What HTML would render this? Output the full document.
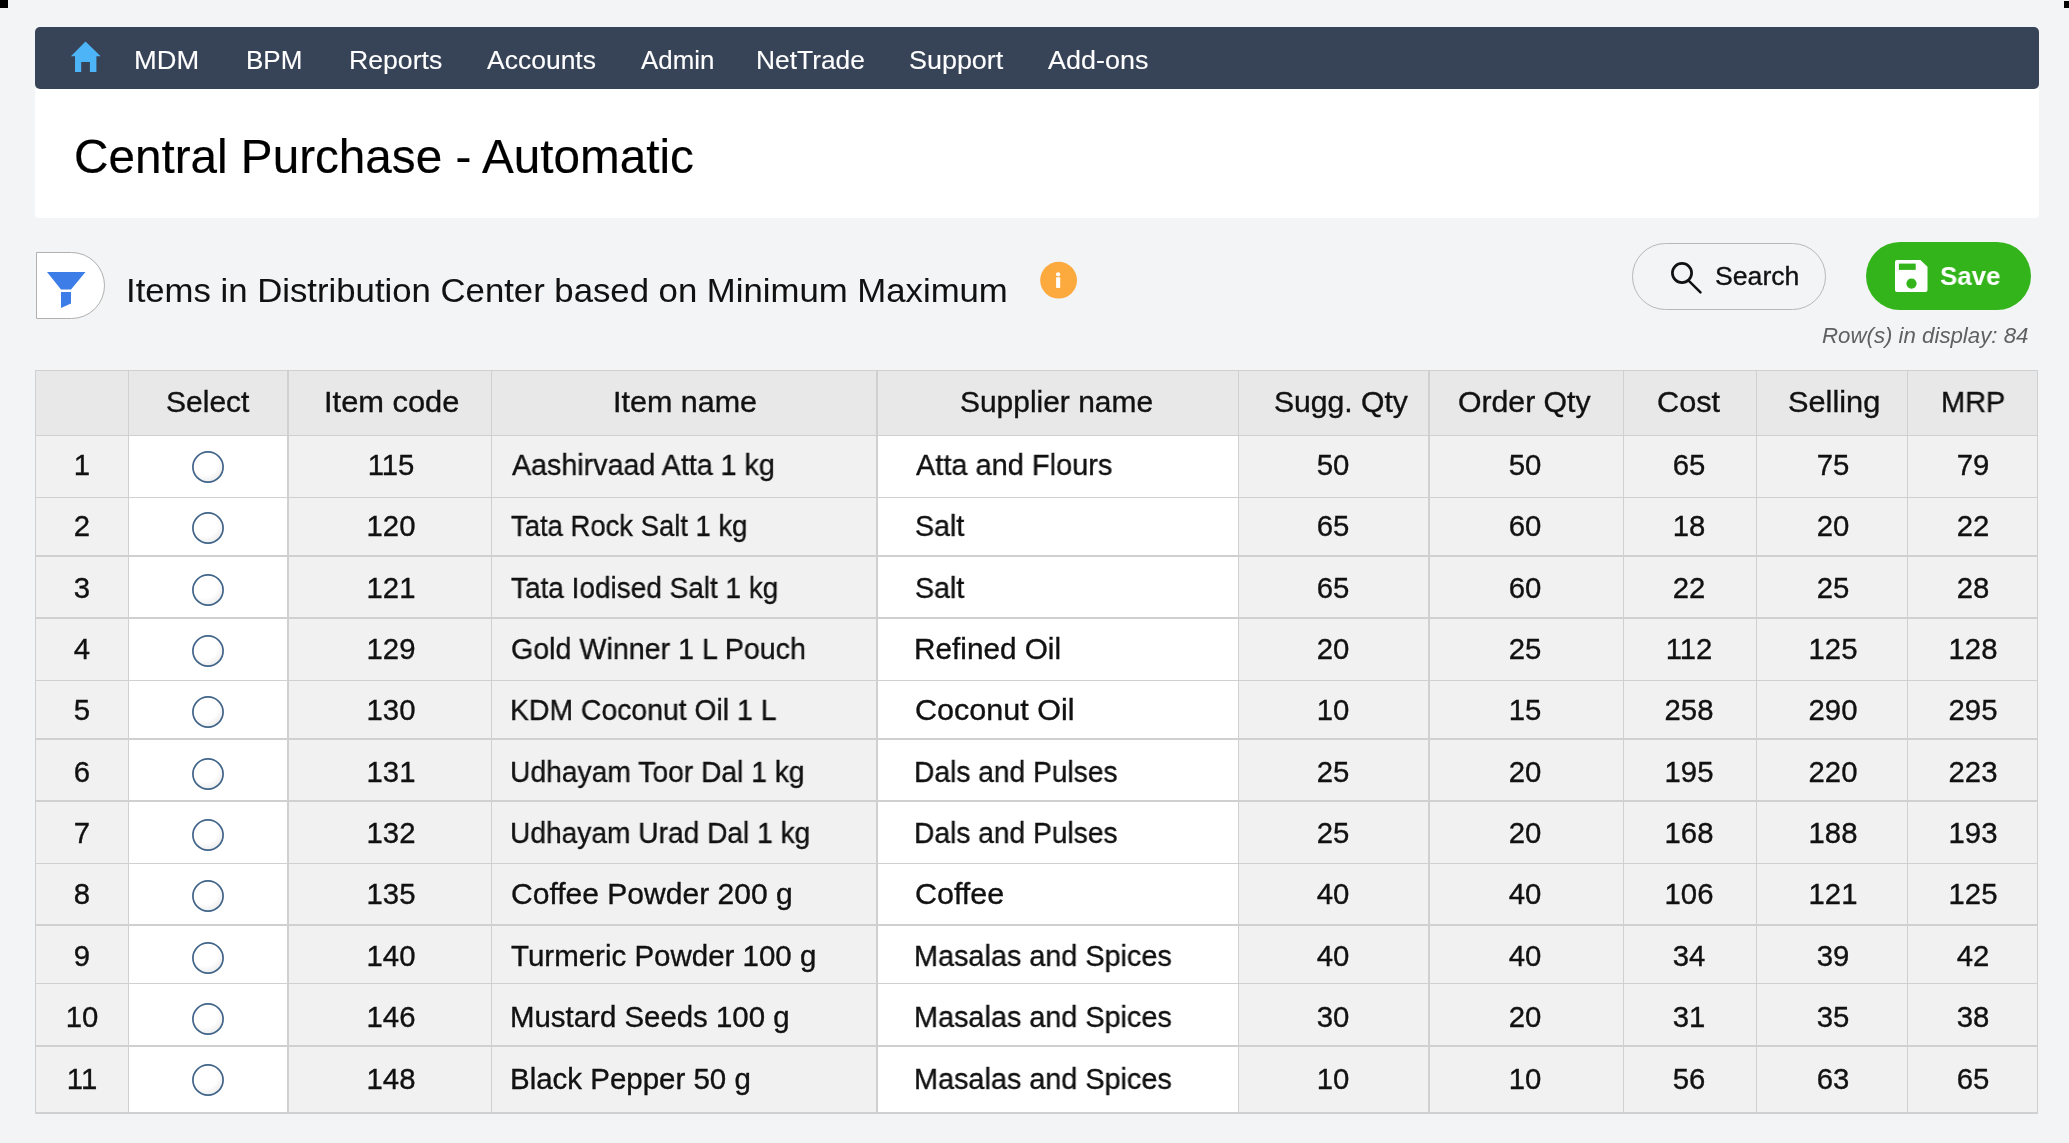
<!DOCTYPE html>
<html><head><meta charset="utf-8"><style>
html,body{margin:0;padding:0;}
body{width:2069px;height:1143px;background:#f3f4f6;position:relative;overflow:hidden;font-family:"Liberation Sans", sans-serif;}
.t{position:absolute;white-space:nowrap;-webkit-text-stroke:0.35px currentColor;will-change:transform;}
</style></head><body>
<svg width="0" height="0" style="position:absolute"><defs><radialGradient id="rg" cx="0.4" cy="0.35" r="0.75"><stop offset="0.55" stop-color="#ffffff"/><stop offset="1" stop-color="#e6e6e6"/></radialGradient></defs></svg>
<div style="position:absolute;left:0;top:0;width:8px;height:8px;background:#000"></div>
<div style="position:absolute;left:2064px;top:1px;width:5px;height:7px;background:#000"></div>
<div style="position:absolute;left:35px;top:27px;width:2004px;height:62px;background:#374357;border-radius:5px"></div>
<svg style="position:absolute;left:0;top:0" width="200" height="100"><path d="M85.5 41.5 L100.7 56.2 L96.4 56.2 L96.4 72 L89.9 72 L89.9 62 L81.2 62 L81.2 72 L75 72 L75 56.2 L70.9 56.2 Z" fill="#4db4f7"/></svg>
<div style="position:absolute;left:35px;top:89px;width:2004px;height:129px;background:#fff;border-radius:0 0 4px 4px"></div>
<div style="position:absolute;left:36px;top:252px;width:69px;height:67px;box-sizing:border-box;border:1px solid #b0b0b0;border-radius:0 33.5px 33.5px 0;background:#fff"></div>
<svg style="position:absolute;left:0;top:0" width="120" height="330"><path d="M47 272 L85.5 272 L71 289.5 L61 289.5 Z M61 292 L71 292 L71 303.5 L61 308 Z" fill="#3d7de8"/></svg>
<svg style="position:absolute;left:1030px;top:250px" width="60" height="60"><circle cx="28.6" cy="30.2" r="18.4" fill="#fcaa3e"/><circle cx="28.1" cy="24.3" r="2.1" fill="#fff"/><rect x="26.1" y="27.3" width="4.1" height="10.6" fill="#fff"/></svg>
<div style="position:absolute;left:1632px;top:243px;width:194px;height:67px;box-sizing:border-box;border:1.2px solid #b8b8b8;border-radius:34px"></div>
<svg style="position:absolute;left:1660px;top:250px" width="60" height="60"><circle cx="22" cy="23" r="9.6" fill="none" stroke="#111" stroke-width="2.7"/><path d="M28.6 30.6 L40.5 42.3" stroke="#111" stroke-width="2.5" stroke-linecap="round"/></svg>
<div style="position:absolute;left:1865.5px;top:242px;width:165px;height:68px;border-radius:34px;background:#33b41a"></div>
<svg style="position:absolute;left:1890px;top:255px" width="45" height="45"><path d="M7 5 h23.4 l7.1 6.8 v23.2 a2 2 0 0 1 -2 2 h-28.5 a2 2 0 0 1 -2 -2 v-28 a2 2 0 0 1 2 -2 z" fill="#fff"/><rect x="8.9" y="8.6" width="16.8" height="6.3" fill="#33b41a"/><circle cx="21.5" cy="28.6" r="5.1" fill="#33b41a"/></svg>
<div style="position:absolute;left:35px;top:370px;width:2002px;height:65px;background:#e8e8e8"></div>
<div style="position:absolute;left:35px;top:435px;width:93.00px;height:677.5px;background:#f1f1f1"></div>
<div style="position:absolute;left:128px;top:435px;width:159.50px;height:677.5px;background:#ffffff"></div>
<div style="position:absolute;left:287.5px;top:435px;width:203.50px;height:677.5px;background:#f1f1f1"></div>
<div style="position:absolute;left:491px;top:435px;width:385.50px;height:677.5px;background:#f1f1f1"></div>
<div style="position:absolute;left:876.5px;top:435px;width:361.50px;height:677.5px;background:#ffffff"></div>
<div style="position:absolute;left:1238px;top:435px;width:190.70px;height:677.5px;background:#f1f1f1"></div>
<div style="position:absolute;left:1428.7px;top:435px;width:194.60px;height:677.5px;background:#f1f1f1"></div>
<div style="position:absolute;left:1623.3px;top:435px;width:132.70px;height:677.5px;background:#f1f1f1"></div>
<div style="position:absolute;left:1756px;top:435px;width:151.20px;height:677.5px;background:#f1f1f1"></div>
<div style="position:absolute;left:1907.2px;top:435px;width:129.80px;height:677.5px;background:#f1f1f1"></div>
<div style="position:absolute;left:35px;top:369.50px;width:2003px;height:1.5px;background:#d0d0d0"></div>
<div style="position:absolute;left:35px;top:434.50px;width:2003px;height:1.5px;background:#d0d0d0"></div>
<div style="position:absolute;left:35px;top:496.70px;width:2003px;height:1.5px;background:#d0d0d0"></div>
<div style="position:absolute;left:35px;top:555.10px;width:2003px;height:1.5px;background:#d0d0d0"></div>
<div style="position:absolute;left:35px;top:617.40px;width:2003px;height:1.5px;background:#d0d0d0"></div>
<div style="position:absolute;left:35px;top:679.50px;width:2003px;height:1.5px;background:#d0d0d0"></div>
<div style="position:absolute;left:35px;top:738.00px;width:2003px;height:1.5px;background:#d0d0d0"></div>
<div style="position:absolute;left:35px;top:800.40px;width:2003px;height:1.5px;background:#d0d0d0"></div>
<div style="position:absolute;left:35px;top:862.50px;width:2003px;height:1.5px;background:#d0d0d0"></div>
<div style="position:absolute;left:35px;top:924.00px;width:2003px;height:1.5px;background:#d0d0d0"></div>
<div style="position:absolute;left:35px;top:982.90px;width:2003px;height:1.5px;background:#d0d0d0"></div>
<div style="position:absolute;left:35px;top:1045.40px;width:2003px;height:1.5px;background:#d0d0d0"></div>
<div style="position:absolute;left:35px;top:1112.00px;width:2003px;height:1.5px;background:#d0d0d0"></div>
<div style="position:absolute;left:34.50px;top:370px;width:1.5px;height:743.5px;background:#d0d0d0"></div>
<div style="position:absolute;left:127.50px;top:370px;width:1.5px;height:743.5px;background:#d0d0d0"></div>
<div style="position:absolute;left:287.00px;top:370px;width:1.5px;height:743.5px;background:#d0d0d0"></div>
<div style="position:absolute;left:490.50px;top:370px;width:1.5px;height:743.5px;background:#d0d0d0"></div>
<div style="position:absolute;left:876.00px;top:370px;width:1.5px;height:743.5px;background:#d0d0d0"></div>
<div style="position:absolute;left:1237.50px;top:370px;width:1.5px;height:743.5px;background:#d0d0d0"></div>
<div style="position:absolute;left:1428.20px;top:370px;width:1.5px;height:743.5px;background:#d0d0d0"></div>
<div style="position:absolute;left:1622.80px;top:370px;width:1.5px;height:743.5px;background:#d0d0d0"></div>
<div style="position:absolute;left:1755.50px;top:370px;width:1.5px;height:743.5px;background:#d0d0d0"></div>
<div style="position:absolute;left:1906.70px;top:370px;width:1.5px;height:743.5px;background:#d0d0d0"></div>
<div style="position:absolute;left:2036.50px;top:370px;width:1.5px;height:743.5px;background:#d0d0d0"></div>
<div class="t" style="left:-218.50px;width:600px;text-align:center;top:450.00px;font-size:29.3px;line-height:29.3px;color:#111;font-weight:normal;font-style:normal;transform-origin:50% 0;">1</div>
<svg style="position:absolute;left:188px;top:446.80px" width="40" height="40"><circle cx="20" cy="20" r="15.1" fill="url(#rg)" stroke="#416489" stroke-width="1.7"/></svg>
<div class="t" style="left:90.50px;width:600px;text-align:center;top:450.00px;font-size:29.3px;line-height:29.3px;color:#111;font-weight:normal;font-style:normal;transform-origin:50% 0;">115</div>
<div class="t" style="left:1033.40px;width:600px;text-align:center;top:450.00px;font-size:29.3px;line-height:29.3px;color:#111;font-weight:normal;font-style:normal;transform-origin:50% 0;">50</div>
<div class="t" style="left:1225.00px;width:600px;text-align:center;top:450.00px;font-size:29.3px;line-height:29.3px;color:#111;font-weight:normal;font-style:normal;transform-origin:50% 0;">50</div>
<div class="t" style="left:1389.00px;width:600px;text-align:center;top:450.00px;font-size:29.3px;line-height:29.3px;color:#111;font-weight:normal;font-style:normal;transform-origin:50% 0;">65</div>
<div class="t" style="left:1532.50px;width:600px;text-align:center;top:450.00px;font-size:29.3px;line-height:29.3px;color:#111;font-weight:normal;font-style:normal;transform-origin:50% 0;">75</div>
<div class="t" style="left:1672.50px;width:600px;text-align:center;top:450.00px;font-size:29.3px;line-height:29.3px;color:#111;font-weight:normal;font-style:normal;transform-origin:50% 0;">79</div>
<div class="t" style="left:-218.50px;width:600px;text-align:center;top:511.35px;font-size:29.3px;line-height:29.3px;color:#111;font-weight:normal;font-style:normal;transform-origin:50% 0;">2</div>
<svg style="position:absolute;left:188px;top:508.15px" width="40" height="40"><circle cx="20" cy="20" r="15.1" fill="url(#rg)" stroke="#416489" stroke-width="1.7"/></svg>
<div class="t" style="left:90.50px;width:600px;text-align:center;top:511.35px;font-size:29.3px;line-height:29.3px;color:#111;font-weight:normal;font-style:normal;transform-origin:50% 0;">120</div>
<div class="t" style="left:1033.40px;width:600px;text-align:center;top:511.35px;font-size:29.3px;line-height:29.3px;color:#111;font-weight:normal;font-style:normal;transform-origin:50% 0;">65</div>
<div class="t" style="left:1225.00px;width:600px;text-align:center;top:511.35px;font-size:29.3px;line-height:29.3px;color:#111;font-weight:normal;font-style:normal;transform-origin:50% 0;">60</div>
<div class="t" style="left:1389.00px;width:600px;text-align:center;top:511.35px;font-size:29.3px;line-height:29.3px;color:#111;font-weight:normal;font-style:normal;transform-origin:50% 0;">18</div>
<div class="t" style="left:1532.50px;width:600px;text-align:center;top:511.35px;font-size:29.3px;line-height:29.3px;color:#111;font-weight:normal;font-style:normal;transform-origin:50% 0;">20</div>
<div class="t" style="left:1672.50px;width:600px;text-align:center;top:511.35px;font-size:29.3px;line-height:29.3px;color:#111;font-weight:normal;font-style:normal;transform-origin:50% 0;">22</div>
<div class="t" style="left:-218.50px;width:600px;text-align:center;top:572.70px;font-size:29.3px;line-height:29.3px;color:#111;font-weight:normal;font-style:normal;transform-origin:50% 0;">3</div>
<svg style="position:absolute;left:188px;top:569.50px" width="40" height="40"><circle cx="20" cy="20" r="15.1" fill="url(#rg)" stroke="#416489" stroke-width="1.7"/></svg>
<div class="t" style="left:90.50px;width:600px;text-align:center;top:572.70px;font-size:29.3px;line-height:29.3px;color:#111;font-weight:normal;font-style:normal;transform-origin:50% 0;">121</div>
<div class="t" style="left:1033.40px;width:600px;text-align:center;top:572.70px;font-size:29.3px;line-height:29.3px;color:#111;font-weight:normal;font-style:normal;transform-origin:50% 0;">65</div>
<div class="t" style="left:1225.00px;width:600px;text-align:center;top:572.70px;font-size:29.3px;line-height:29.3px;color:#111;font-weight:normal;font-style:normal;transform-origin:50% 0;">60</div>
<div class="t" style="left:1389.00px;width:600px;text-align:center;top:572.70px;font-size:29.3px;line-height:29.3px;color:#111;font-weight:normal;font-style:normal;transform-origin:50% 0;">22</div>
<div class="t" style="left:1532.50px;width:600px;text-align:center;top:572.70px;font-size:29.3px;line-height:29.3px;color:#111;font-weight:normal;font-style:normal;transform-origin:50% 0;">25</div>
<div class="t" style="left:1672.50px;width:600px;text-align:center;top:572.70px;font-size:29.3px;line-height:29.3px;color:#111;font-weight:normal;font-style:normal;transform-origin:50% 0;">28</div>
<div class="t" style="left:-218.50px;width:600px;text-align:center;top:634.05px;font-size:29.3px;line-height:29.3px;color:#111;font-weight:normal;font-style:normal;transform-origin:50% 0;">4</div>
<svg style="position:absolute;left:188px;top:630.85px" width="40" height="40"><circle cx="20" cy="20" r="15.1" fill="url(#rg)" stroke="#416489" stroke-width="1.7"/></svg>
<div class="t" style="left:90.50px;width:600px;text-align:center;top:634.05px;font-size:29.3px;line-height:29.3px;color:#111;font-weight:normal;font-style:normal;transform-origin:50% 0;">129</div>
<div class="t" style="left:1033.40px;width:600px;text-align:center;top:634.05px;font-size:29.3px;line-height:29.3px;color:#111;font-weight:normal;font-style:normal;transform-origin:50% 0;">20</div>
<div class="t" style="left:1225.00px;width:600px;text-align:center;top:634.05px;font-size:29.3px;line-height:29.3px;color:#111;font-weight:normal;font-style:normal;transform-origin:50% 0;">25</div>
<div class="t" style="left:1389.00px;width:600px;text-align:center;top:634.05px;font-size:29.3px;line-height:29.3px;color:#111;font-weight:normal;font-style:normal;transform-origin:50% 0;">112</div>
<div class="t" style="left:1532.50px;width:600px;text-align:center;top:634.05px;font-size:29.3px;line-height:29.3px;color:#111;font-weight:normal;font-style:normal;transform-origin:50% 0;">125</div>
<div class="t" style="left:1672.50px;width:600px;text-align:center;top:634.05px;font-size:29.3px;line-height:29.3px;color:#111;font-weight:normal;font-style:normal;transform-origin:50% 0;">128</div>
<div class="t" style="left:-218.50px;width:600px;text-align:center;top:695.40px;font-size:29.3px;line-height:29.3px;color:#111;font-weight:normal;font-style:normal;transform-origin:50% 0;">5</div>
<svg style="position:absolute;left:188px;top:692.20px" width="40" height="40"><circle cx="20" cy="20" r="15.1" fill="url(#rg)" stroke="#416489" stroke-width="1.7"/></svg>
<div class="t" style="left:90.50px;width:600px;text-align:center;top:695.40px;font-size:29.3px;line-height:29.3px;color:#111;font-weight:normal;font-style:normal;transform-origin:50% 0;">130</div>
<div class="t" style="left:1033.40px;width:600px;text-align:center;top:695.40px;font-size:29.3px;line-height:29.3px;color:#111;font-weight:normal;font-style:normal;transform-origin:50% 0;">10</div>
<div class="t" style="left:1225.00px;width:600px;text-align:center;top:695.40px;font-size:29.3px;line-height:29.3px;color:#111;font-weight:normal;font-style:normal;transform-origin:50% 0;">15</div>
<div class="t" style="left:1389.00px;width:600px;text-align:center;top:695.40px;font-size:29.3px;line-height:29.3px;color:#111;font-weight:normal;font-style:normal;transform-origin:50% 0;">258</div>
<div class="t" style="left:1532.50px;width:600px;text-align:center;top:695.40px;font-size:29.3px;line-height:29.3px;color:#111;font-weight:normal;font-style:normal;transform-origin:50% 0;">290</div>
<div class="t" style="left:1672.50px;width:600px;text-align:center;top:695.40px;font-size:29.3px;line-height:29.3px;color:#111;font-weight:normal;font-style:normal;transform-origin:50% 0;">295</div>
<div class="t" style="left:-218.50px;width:600px;text-align:center;top:756.75px;font-size:29.3px;line-height:29.3px;color:#111;font-weight:normal;font-style:normal;transform-origin:50% 0;">6</div>
<svg style="position:absolute;left:188px;top:753.55px" width="40" height="40"><circle cx="20" cy="20" r="15.1" fill="url(#rg)" stroke="#416489" stroke-width="1.7"/></svg>
<div class="t" style="left:90.50px;width:600px;text-align:center;top:756.75px;font-size:29.3px;line-height:29.3px;color:#111;font-weight:normal;font-style:normal;transform-origin:50% 0;">131</div>
<div class="t" style="left:1033.40px;width:600px;text-align:center;top:756.75px;font-size:29.3px;line-height:29.3px;color:#111;font-weight:normal;font-style:normal;transform-origin:50% 0;">25</div>
<div class="t" style="left:1225.00px;width:600px;text-align:center;top:756.75px;font-size:29.3px;line-height:29.3px;color:#111;font-weight:normal;font-style:normal;transform-origin:50% 0;">20</div>
<div class="t" style="left:1389.00px;width:600px;text-align:center;top:756.75px;font-size:29.3px;line-height:29.3px;color:#111;font-weight:normal;font-style:normal;transform-origin:50% 0;">195</div>
<div class="t" style="left:1532.50px;width:600px;text-align:center;top:756.75px;font-size:29.3px;line-height:29.3px;color:#111;font-weight:normal;font-style:normal;transform-origin:50% 0;">220</div>
<div class="t" style="left:1672.50px;width:600px;text-align:center;top:756.75px;font-size:29.3px;line-height:29.3px;color:#111;font-weight:normal;font-style:normal;transform-origin:50% 0;">223</div>
<div class="t" style="left:-218.50px;width:600px;text-align:center;top:818.10px;font-size:29.3px;line-height:29.3px;color:#111;font-weight:normal;font-style:normal;transform-origin:50% 0;">7</div>
<svg style="position:absolute;left:188px;top:814.90px" width="40" height="40"><circle cx="20" cy="20" r="15.1" fill="url(#rg)" stroke="#416489" stroke-width="1.7"/></svg>
<div class="t" style="left:90.50px;width:600px;text-align:center;top:818.10px;font-size:29.3px;line-height:29.3px;color:#111;font-weight:normal;font-style:normal;transform-origin:50% 0;">132</div>
<div class="t" style="left:1033.40px;width:600px;text-align:center;top:818.10px;font-size:29.3px;line-height:29.3px;color:#111;font-weight:normal;font-style:normal;transform-origin:50% 0;">25</div>
<div class="t" style="left:1225.00px;width:600px;text-align:center;top:818.10px;font-size:29.3px;line-height:29.3px;color:#111;font-weight:normal;font-style:normal;transform-origin:50% 0;">20</div>
<div class="t" style="left:1389.00px;width:600px;text-align:center;top:818.10px;font-size:29.3px;line-height:29.3px;color:#111;font-weight:normal;font-style:normal;transform-origin:50% 0;">168</div>
<div class="t" style="left:1532.50px;width:600px;text-align:center;top:818.10px;font-size:29.3px;line-height:29.3px;color:#111;font-weight:normal;font-style:normal;transform-origin:50% 0;">188</div>
<div class="t" style="left:1672.50px;width:600px;text-align:center;top:818.10px;font-size:29.3px;line-height:29.3px;color:#111;font-weight:normal;font-style:normal;transform-origin:50% 0;">193</div>
<div class="t" style="left:-218.50px;width:600px;text-align:center;top:879.45px;font-size:29.3px;line-height:29.3px;color:#111;font-weight:normal;font-style:normal;transform-origin:50% 0;">8</div>
<svg style="position:absolute;left:188px;top:876.25px" width="40" height="40"><circle cx="20" cy="20" r="15.1" fill="url(#rg)" stroke="#416489" stroke-width="1.7"/></svg>
<div class="t" style="left:90.50px;width:600px;text-align:center;top:879.45px;font-size:29.3px;line-height:29.3px;color:#111;font-weight:normal;font-style:normal;transform-origin:50% 0;">135</div>
<div class="t" style="left:1033.40px;width:600px;text-align:center;top:879.45px;font-size:29.3px;line-height:29.3px;color:#111;font-weight:normal;font-style:normal;transform-origin:50% 0;">40</div>
<div class="t" style="left:1225.00px;width:600px;text-align:center;top:879.45px;font-size:29.3px;line-height:29.3px;color:#111;font-weight:normal;font-style:normal;transform-origin:50% 0;">40</div>
<div class="t" style="left:1389.00px;width:600px;text-align:center;top:879.45px;font-size:29.3px;line-height:29.3px;color:#111;font-weight:normal;font-style:normal;transform-origin:50% 0;">106</div>
<div class="t" style="left:1532.50px;width:600px;text-align:center;top:879.45px;font-size:29.3px;line-height:29.3px;color:#111;font-weight:normal;font-style:normal;transform-origin:50% 0;">121</div>
<div class="t" style="left:1672.50px;width:600px;text-align:center;top:879.45px;font-size:29.3px;line-height:29.3px;color:#111;font-weight:normal;font-style:normal;transform-origin:50% 0;">125</div>
<div class="t" style="left:-218.50px;width:600px;text-align:center;top:940.80px;font-size:29.3px;line-height:29.3px;color:#111;font-weight:normal;font-style:normal;transform-origin:50% 0;">9</div>
<svg style="position:absolute;left:188px;top:937.60px" width="40" height="40"><circle cx="20" cy="20" r="15.1" fill="url(#rg)" stroke="#416489" stroke-width="1.7"/></svg>
<div class="t" style="left:90.50px;width:600px;text-align:center;top:940.80px;font-size:29.3px;line-height:29.3px;color:#111;font-weight:normal;font-style:normal;transform-origin:50% 0;">140</div>
<div class="t" style="left:1033.40px;width:600px;text-align:center;top:940.80px;font-size:29.3px;line-height:29.3px;color:#111;font-weight:normal;font-style:normal;transform-origin:50% 0;">40</div>
<div class="t" style="left:1225.00px;width:600px;text-align:center;top:940.80px;font-size:29.3px;line-height:29.3px;color:#111;font-weight:normal;font-style:normal;transform-origin:50% 0;">40</div>
<div class="t" style="left:1389.00px;width:600px;text-align:center;top:940.80px;font-size:29.3px;line-height:29.3px;color:#111;font-weight:normal;font-style:normal;transform-origin:50% 0;">34</div>
<div class="t" style="left:1532.50px;width:600px;text-align:center;top:940.80px;font-size:29.3px;line-height:29.3px;color:#111;font-weight:normal;font-style:normal;transform-origin:50% 0;">39</div>
<div class="t" style="left:1672.50px;width:600px;text-align:center;top:940.80px;font-size:29.3px;line-height:29.3px;color:#111;font-weight:normal;font-style:normal;transform-origin:50% 0;">42</div>
<div class="t" style="left:-218.50px;width:600px;text-align:center;top:1002.15px;font-size:29.3px;line-height:29.3px;color:#111;font-weight:normal;font-style:normal;transform-origin:50% 0;">10</div>
<svg style="position:absolute;left:188px;top:998.95px" width="40" height="40"><circle cx="20" cy="20" r="15.1" fill="url(#rg)" stroke="#416489" stroke-width="1.7"/></svg>
<div class="t" style="left:90.50px;width:600px;text-align:center;top:1002.15px;font-size:29.3px;line-height:29.3px;color:#111;font-weight:normal;font-style:normal;transform-origin:50% 0;">146</div>
<div class="t" style="left:1033.40px;width:600px;text-align:center;top:1002.15px;font-size:29.3px;line-height:29.3px;color:#111;font-weight:normal;font-style:normal;transform-origin:50% 0;">30</div>
<div class="t" style="left:1225.00px;width:600px;text-align:center;top:1002.15px;font-size:29.3px;line-height:29.3px;color:#111;font-weight:normal;font-style:normal;transform-origin:50% 0;">20</div>
<div class="t" style="left:1389.00px;width:600px;text-align:center;top:1002.15px;font-size:29.3px;line-height:29.3px;color:#111;font-weight:normal;font-style:normal;transform-origin:50% 0;">31</div>
<div class="t" style="left:1532.50px;width:600px;text-align:center;top:1002.15px;font-size:29.3px;line-height:29.3px;color:#111;font-weight:normal;font-style:normal;transform-origin:50% 0;">35</div>
<div class="t" style="left:1672.50px;width:600px;text-align:center;top:1002.15px;font-size:29.3px;line-height:29.3px;color:#111;font-weight:normal;font-style:normal;transform-origin:50% 0;">38</div>
<div class="t" style="left:-218.50px;width:600px;text-align:center;top:1063.50px;font-size:29.3px;line-height:29.3px;color:#111;font-weight:normal;font-style:normal;transform-origin:50% 0;">11</div>
<svg style="position:absolute;left:188px;top:1060.30px" width="40" height="40"><circle cx="20" cy="20" r="15.1" fill="url(#rg)" stroke="#416489" stroke-width="1.7"/></svg>
<div class="t" style="left:90.50px;width:600px;text-align:center;top:1063.50px;font-size:29.3px;line-height:29.3px;color:#111;font-weight:normal;font-style:normal;transform-origin:50% 0;">148</div>
<div class="t" style="left:1033.40px;width:600px;text-align:center;top:1063.50px;font-size:29.3px;line-height:29.3px;color:#111;font-weight:normal;font-style:normal;transform-origin:50% 0;">10</div>
<div class="t" style="left:1225.00px;width:600px;text-align:center;top:1063.50px;font-size:29.3px;line-height:29.3px;color:#111;font-weight:normal;font-style:normal;transform-origin:50% 0;">10</div>
<div class="t" style="left:1389.00px;width:600px;text-align:center;top:1063.50px;font-size:29.3px;line-height:29.3px;color:#111;font-weight:normal;font-style:normal;transform-origin:50% 0;">56</div>
<div class="t" style="left:1532.50px;width:600px;text-align:center;top:1063.50px;font-size:29.3px;line-height:29.3px;color:#111;font-weight:normal;font-style:normal;transform-origin:50% 0;">63</div>
<div class="t" style="left:1672.50px;width:600px;text-align:center;top:1063.50px;font-size:29.3px;line-height:29.3px;color:#111;font-weight:normal;font-style:normal;transform-origin:50% 0;">65</div>
<div class="t" style="left:133.52px;top:48.24px;font-size:25px;line-height:25px;color:#fff;font-weight:normal;font-style:normal;transform:scaleX(1.0911);transform-origin:0 0;-webkit-text-stroke:0.1px currentColor;">MDM</div>
<div class="t" style="left:245.92px;top:48.24px;font-size:25px;line-height:25px;color:#fff;font-weight:normal;font-style:normal;transform:scaleX(1.0400);transform-origin:0 0;-webkit-text-stroke:0.1px currentColor;">BPM</div>
<div class="t" style="left:349.37px;top:48.24px;font-size:25px;line-height:25px;color:#fff;font-weight:normal;font-style:normal;transform:scaleX(1.0647);transform-origin:0 0;-webkit-text-stroke:0.1px currentColor;">Reports</div>
<div class="t" style="left:486.80px;top:48.24px;font-size:25px;line-height:25px;color:#fff;font-weight:normal;font-style:normal;transform:scaleX(1.0598);transform-origin:0 0;-webkit-text-stroke:0.1px currentColor;">Accounts</div>
<div class="t" style="left:640.60px;top:48.24px;font-size:25px;line-height:25px;color:#fff;font-weight:normal;font-style:normal;transform:scaleX(1.0343);transform-origin:0 0;-webkit-text-stroke:0.1px currentColor;">Admin</div>
<div class="t" style="left:755.89px;top:48.24px;font-size:25px;line-height:25px;color:#fff;font-weight:normal;font-style:normal;transform:scaleX(1.0545);transform-origin:0 0;-webkit-text-stroke:0.1px currentColor;">NetTrade</div>
<div class="t" style="left:908.62px;top:48.24px;font-size:25px;line-height:25px;color:#fff;font-weight:normal;font-style:normal;transform:scaleX(1.0767);transform-origin:0 0;-webkit-text-stroke:0.1px currentColor;">Support</div>
<div class="t" style="left:1047.50px;top:48.24px;font-size:25px;line-height:25px;color:#fff;font-weight:normal;font-style:normal;transform:scaleX(1.0783);transform-origin:0 0;-webkit-text-stroke:0.1px currentColor;">Add-ons</div>
<div class="t" style="left:73.99px;top:132.79px;font-size:47.5px;line-height:47.5px;color:#000;font-weight:normal;font-style:normal;transform:scaleX(1.0033);transform-origin:0 0;-webkit-text-stroke:0.2px currentColor;">Central Purchase - Automatic</div>
<div class="t" style="left:125.69px;top:273.64px;font-size:33.5px;line-height:33.5px;color:#111;font-weight:normal;font-style:normal;transform:scaleX(1.0364);transform-origin:0 0;-webkit-text-stroke:0.05px currentColor;">Items in Distribution Center based on Minimum Maximum</div>
<div class="t" style="left:1714.60px;top:262.57px;font-size:26.5px;line-height:26.5px;color:#111;font-weight:normal;font-style:normal;transform:scaleX(1.0049);transform-origin:0 0;">Search</div>
<div class="t" style="left:1940.03px;top:262.57px;font-size:26.5px;line-height:26.5px;color:#fff;font-weight:bold;font-style:normal;transform:scaleX(0.9750);transform-origin:0 0;-webkit-text-stroke:0px;">Save</div>
<div class="t" style="left:1822.39px;top:324.98px;font-size:22px;line-height:22px;color:#606060;font-weight:normal;font-style:italic;transform:scaleX(1.0108);transform-origin:0 0;-webkit-text-stroke:0px;">Row(s) in display: 84</div>
<div class="t" style="left:165.97px;top:386.80px;font-size:29.3px;line-height:29.3px;color:#111;font-weight:normal;font-style:normal;transform:scaleX(1.0250);transform-origin:0 0;">Select</div>
<div class="t" style="left:323.94px;top:386.80px;font-size:29.3px;line-height:29.3px;color:#111;font-weight:normal;font-style:normal;transform:scaleX(1.0524);transform-origin:0 0;">Item code</div>
<div class="t" style="left:612.58px;top:386.80px;font-size:29.3px;line-height:29.3px;color:#111;font-weight:normal;font-style:normal;transform:scaleX(1.0410);transform-origin:0 0;">Item name</div>
<div class="t" style="left:959.58px;top:386.80px;font-size:29.3px;line-height:29.3px;color:#111;font-weight:normal;font-style:normal;transform:scaleX(1.0219);transform-origin:0 0;">Supplier name</div>
<div class="t" style="left:1273.57px;top:386.80px;font-size:29.3px;line-height:29.3px;color:#111;font-weight:normal;font-style:normal;transform:scaleX(1.0279);transform-origin:0 0;">Sugg. Qty</div>
<div class="t" style="left:1457.97px;top:386.80px;font-size:29.3px;line-height:29.3px;color:#111;font-weight:normal;font-style:normal;transform:scaleX(1.0312);transform-origin:0 0;">Order Qty</div>
<div class="t" style="left:1656.75px;top:386.80px;font-size:29.3px;line-height:29.3px;color:#111;font-weight:normal;font-style:normal;transform:scaleX(1.0458);transform-origin:0 0;">Cost</div>
<div class="t" style="left:1787.75px;top:386.80px;font-size:29.3px;line-height:29.3px;color:#111;font-weight:normal;font-style:normal;transform:scaleX(1.0494);transform-origin:0 0;">Selling</div>
<div class="t" style="left:1940.53px;top:386.80px;font-size:29.3px;line-height:29.3px;color:#111;font-weight:normal;font-style:normal;transform:scaleX(0.9871);transform-origin:0 0;">MRP</div>
<div class="t" style="left:512.20px;top:450.00px;font-size:29.3px;line-height:29.3px;color:#111;font-weight:normal;font-style:normal;transform:scaleX(0.9779);transform-origin:0 0;">Aashirvaad Atta 1 kg</div>
<div class="t" style="left:916.30px;top:450.00px;font-size:29.3px;line-height:29.3px;color:#111;font-weight:normal;font-style:normal;transform:scaleX(0.9884);transform-origin:0 0;">Atta and Flours</div>
<div class="t" style="left:511.26px;top:511.35px;font-size:29.3px;line-height:29.3px;color:#111;font-weight:normal;font-style:normal;transform:scaleX(0.9368);transform-origin:0 0;">Tata Rock Salt 1 kg</div>
<div class="t" style="left:915.32px;top:511.35px;font-size:29.3px;line-height:29.3px;color:#111;font-weight:normal;font-style:normal;transform:scaleX(0.9776);transform-origin:0 0;">Salt</div>
<div class="t" style="left:511.25px;top:572.70px;font-size:29.3px;line-height:29.3px;color:#111;font-weight:normal;font-style:normal;transform:scaleX(0.9542);transform-origin:0 0;">Tata Iodised Salt 1 kg</div>
<div class="t" style="left:915.32px;top:572.70px;font-size:29.3px;line-height:29.3px;color:#111;font-weight:normal;font-style:normal;transform:scaleX(0.9776);transform-origin:0 0;">Salt</div>
<div class="t" style="left:511.22px;top:634.05px;font-size:29.3px;line-height:29.3px;color:#111;font-weight:normal;font-style:normal;transform:scaleX(0.9773);transform-origin:0 0;">Gold Winner 1 L Pouch</div>
<div class="t" style="left:914.27px;top:634.05px;font-size:29.3px;line-height:29.3px;color:#111;font-weight:normal;font-style:normal;transform:scaleX(1.0149);transform-origin:0 0;">Refined Oil</div>
<div class="t" style="left:510.26px;top:695.40px;font-size:29.3px;line-height:29.3px;color:#111;font-weight:normal;font-style:normal;transform:scaleX(0.9681);transform-origin:0 0;">KDM Coconut Oil 1 L</div>
<div class="t" style="left:915.26px;top:695.40px;font-size:29.3px;line-height:29.3px;color:#111;font-weight:normal;font-style:normal;transform:scaleX(1.0420);transform-origin:0 0;">Coconut Oil</div>
<div class="t" style="left:510.27px;top:756.75px;font-size:29.3px;line-height:29.3px;color:#111;font-weight:normal;font-style:normal;transform:scaleX(0.9639);transform-origin:0 0;">Udhayam Toor Dal 1 kg</div>
<div class="t" style="left:914.38px;top:756.75px;font-size:29.3px;line-height:29.3px;color:#111;font-weight:normal;font-style:normal;transform:scaleX(0.9617);transform-origin:0 0;">Dals and Pulses</div>
<div class="t" style="left:510.28px;top:818.10px;font-size:29.3px;line-height:29.3px;color:#111;font-weight:normal;font-style:normal;transform:scaleX(0.9605);transform-origin:0 0;">Udhayam Urad Dal 1 kg</div>
<div class="t" style="left:914.38px;top:818.10px;font-size:29.3px;line-height:29.3px;color:#111;font-weight:normal;font-style:normal;transform:scaleX(0.9617);transform-origin:0 0;">Dals and Pulses</div>
<div class="t" style="left:511.17px;top:879.45px;font-size:29.3px;line-height:29.3px;color:#111;font-weight:normal;font-style:normal;transform:scaleX(1.0254);transform-origin:0 0;">Coffee Powder 200 g</div>
<div class="t" style="left:915.26px;top:879.45px;font-size:29.3px;line-height:29.3px;color:#111;font-weight:normal;font-style:normal;transform:scaleX(1.0393);transform-origin:0 0;">Coffee</div>
<div class="t" style="left:511.19px;top:940.80px;font-size:29.3px;line-height:29.3px;color:#111;font-weight:normal;font-style:normal;transform:scaleX(1.0063);transform-origin:0 0;">Turmeric Powder 100 g</div>
<div class="t" style="left:914.33px;top:940.80px;font-size:29.3px;line-height:29.3px;color:#111;font-weight:normal;font-style:normal;transform:scaleX(0.9834);transform-origin:0 0;">Masalas and Spices</div>
<div class="t" style="left:510.19px;top:1002.15px;font-size:29.3px;line-height:29.3px;color:#111;font-weight:normal;font-style:normal;transform:scaleX(1.0040);transform-origin:0 0;">Mustard Seeds 100 g</div>
<div class="t" style="left:914.33px;top:1002.15px;font-size:29.3px;line-height:29.3px;color:#111;font-weight:normal;font-style:normal;transform:scaleX(0.9834);transform-origin:0 0;">Masalas and Spices</div>
<div class="t" style="left:510.19px;top:1063.50px;font-size:29.3px;line-height:29.3px;color:#111;font-weight:normal;font-style:normal;transform:scaleX(1.0059);transform-origin:0 0;">Black Pepper 50 g</div>
<div class="t" style="left:914.33px;top:1063.50px;font-size:29.3px;line-height:29.3px;color:#111;font-weight:normal;font-style:normal;transform:scaleX(0.9834);transform-origin:0 0;">Masalas and Spices</div>
</body></html>
